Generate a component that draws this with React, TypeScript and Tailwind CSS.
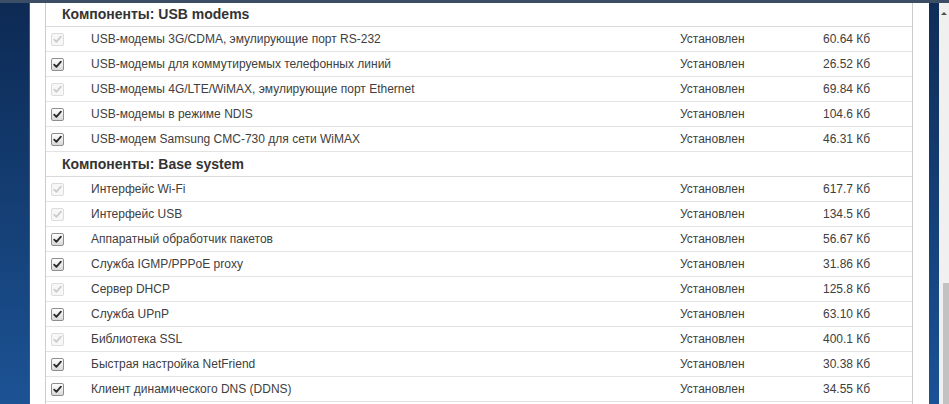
import React from 'react';

type Row = { name: string; size: string; locked?: boolean };

const groups: { title: string; rows: Row[] }[] = [
  {
    title: 'Компоненты: USB modems',
    rows: [
      { name: 'USB-модемы 3G/CDMA, эмулирующие порт RS-232', size: '60.64 Кб', locked: true },
      { name: 'USB-модемы для коммутируемых телефонных линий', size: '26.52 Кб' },
      { name: 'USB-модемы 4G/LTE/WiMAX, эмулирующие порт Ethernet', size: '69.84 Кб', locked: true },
      { name: 'USB-модемы в режиме NDIS', size: '104.6 Кб' },
      { name: 'USB-модем Samsung CMC-730 для сети WiMAX', size: '46.31 Кб' },
    ],
  },
  {
    title: 'Компоненты: Base system',
    rows: [
      { name: 'Интерфейс Wi-Fi', size: '617.7 Кб', locked: true },
      { name: 'Интерфейс USB', size: '134.5 Кб', locked: true },
      { name: 'Аппаратный обработчик пакетов', size: '56.67 Кб' },
      { name: 'Служба IGMP/PPPoE proxy', size: '31.86 Кб' },
      { name: 'Сервер DHCP', size: '125.8 Кб', locked: true },
      { name: 'Служба UPnP', size: '63.10 Кб' },
      { name: 'Библиотека SSL', size: '400.1 Кб', locked: true },
      { name: 'Быстрая настройка NetFriend', size: '30.38 Кб' },
      { name: 'Клиент динамического DNS (DDNS)', size: '34.55 Кб' },
    ],
  },
];

const Check = ({ locked }: { locked?: boolean }) => (
  <span
    className={
      locked
        ? 'flex h-[13px] w-[13px] items-center justify-center rounded-[2px] border border-[#dcdcdc] bg-[#f7f7f7]'
        : 'flex h-[13px] w-[13px] items-center justify-center rounded-[2px] border border-[#8e8e8e] bg-gradient-to-b from-[#ffffff] to-[#d9d9d9]'
    }
  >
    <svg width="9" height="9" viewBox="0 0 9 9">
      <path
        d="M1.2 4.6 L3.4 6.9 L7.9 1.6"
        fill="none"
        stroke={locked ? '#cdcdcd' : '#2b2b2b'}
        strokeWidth="1.8"
        strokeLinecap="round"
        strokeLinejoin="round"
      />
    </svg>
  </span>
);

const App = () => {
  return (
    <div className="flex h-[404px] w-[949px] flex-col overflow-hidden bg-white font-['Liberation_Sans',Arial,sans-serif]">
      <div className="h-[3px] shrink-0 bg-[#3c4d66]" />
      <div className="flex min-h-0 flex-1">
        <div className="w-[30px] shrink-0 border-r border-[#2c5c96] bg-gradient-to-b from-[#0d2a54] to-[#1c5395]" />
        <div className="flex-1 overflow-hidden bg-white pl-[15px]">
          <div className="mt-[-1px] h-[410px] w-[868px] border-x border-[#cbcbcb]">
            {groups.map((g) => (
              <div key={g.title}>
                <div className="flex h-[25px] items-center border-b border-[#dadada] pl-[16px] text-[14px] font-bold text-[#333]">
                  {g.title}
                </div>
                {g.rows.map((r) => (
                  <div
                    key={r.name}
                    className="grid h-[25px] grid-cols-[45px_589px_143px_1fr] items-center border-b border-[#e3e3e3] text-[12px] text-[#404040]"
                  >
                    <div className="pl-[5px]">
                      <Check locked={r.locked} />
                    </div>
                    <div>{r.name}</div>
                    <div>Установлен</div>
                    <div>{r.size}</div>
                  </div>
                ))}
              </div>
            ))}
          </div>
        </div>
        <div className="w-[10px] shrink-0 bg-gradient-to-b from-[#0f2d58] to-[#1a5296]" />
        <div className="flex w-[10px] shrink-0 flex-col bg-[#f0f0f0]">
          <div className="flex h-[24px] items-start justify-center pt-[9px]">
            <span className="h-0 w-0 border-x-[3px] border-b-[3px] border-x-transparent border-b-[#505050]" />
          </div>
          <div className="mt-[256px] ml-[4px] flex-1 bg-[#c2c2c2]" />
        </div>
      </div>
    </div>
  );
};

export default App;
